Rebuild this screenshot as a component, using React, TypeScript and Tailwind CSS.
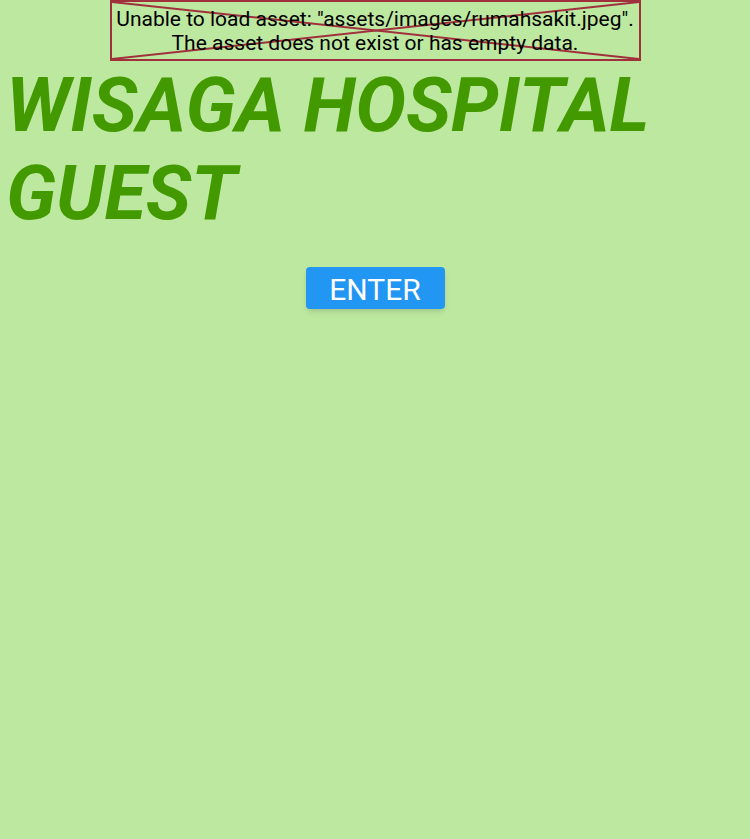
import React from 'react';

export default function App() {
  return (
    <div className="w-[750px] h-[839px] bg-[#bde8a0] font-['Roboto',sans-serif] overflow-hidden">
      {/* missing asset placeholder */}
      <div className="flex justify-center">
        <div className="relative w-[531px] h-[61px] border-2 border-[#a1303d] flex flex-col items-center justify-center">
          <svg className="absolute inset-0" width="100%" height="100%" preserveAspectRatio="none" viewBox="0 0 100 100">
            <line x1="0" y1="0" x2="100" y2="100" stroke="#a1303d" strokeWidth="2" vectorEffect="non-scaling-stroke" />
            <line x1="100" y1="0" x2="0" y2="100" stroke="#a1303d" strokeWidth="2" vectorEffect="non-scaling-stroke" />
          </svg>
          <p className="relative text-[21px] leading-[24px] text-black text-center">
            Unable to load asset: "assets/images/rumahsakit.jpeg".
            <br />
            The asset does not exist or has empty data.
          </p>
        </div>
      </div>

      <h1 className="pl-[6px] text-[76px] leading-[88px] font-bold italic text-[#439a00] tracking-[-0.2px]">
        WISAGA HOSPITAL GUEST
      </h1>

      <div className="flex justify-center mt-[30px]">
        <button className="h-[42px] w-[139px] rounded bg-[#2196f3] text-white text-[30px] shadow-md">
          ENTER
        </button>
      </div>
    </div>
  );
}
